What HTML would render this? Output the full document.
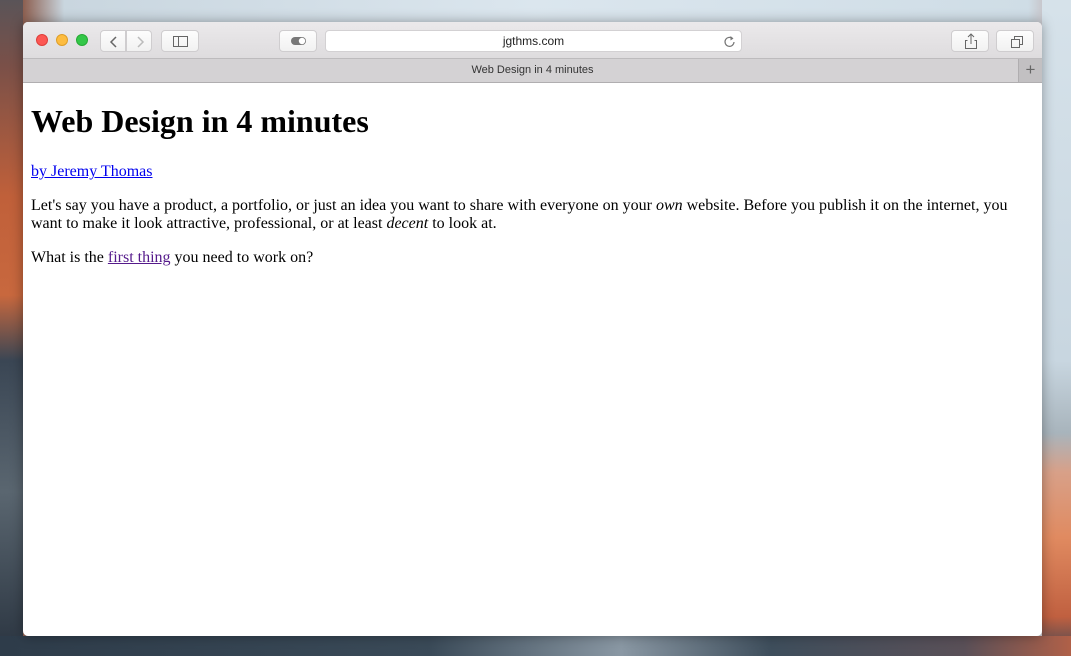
<!DOCTYPE html>
<html><head><meta charset="utf-8"><style>
*{margin:0;padding:0;box-sizing:border-box}
body{width:1071px;height:656px;overflow:hidden;position:relative;
background:linear-gradient(90deg,#6a4a48 0,#8a5a4a 2%,#c9d6df 6%,#dbe6ee 50%,#cfdde6 96%,#b89a98 100%);}
.bgl{position:absolute;left:0;top:0;width:23px;height:656px;background:linear-gradient(180deg,#5a5458 0,#7a5048 10%,#c0603a 30%,#c8683e 45%,#3a4654 55%,#5a6670 75%,#2a3440 100%)}
.bgr{position:absolute;left:1042px;top:0;width:29px;height:656px;background:linear-gradient(180deg,#d6e2ea 0,#c8d6e0 55%,#a8b4bc 66%,#d8a088 72%,#e08a60 82%,#c06040 94%,#3a4656 100%)}
.bgb{position:absolute;left:0;top:636px;width:1071px;height:20px;background:linear-gradient(90deg,#2e3c4a 0,#3a4a58 40%,#8a98a4 58%,#3e4e5c 72%,#5a5058 90%,#b06048 100%)}
.win{position:absolute;left:23px;top:22px;width:1019px;height:614px;background:#fff;border-radius:5px;overflow:hidden;box-shadow:0 0 12px rgba(0,0,0,.35)}
.tb{position:absolute;left:0;top:0;width:1019px;height:37px;background:linear-gradient(#ebe9eb,#dedcde);border-bottom:1px solid #bdbbbd}
.tabs{position:absolute;left:0;top:37px;width:1019px;height:24px;background:#d4d2d4;border-bottom:1px solid #b0aeb0;font:11px "Liberation Sans",sans-serif;color:#333;text-align:center;line-height:23px}
.plus{position:absolute;right:0;top:0;width:24px;height:23px;background:#c2c0c2;border-left:1px solid #b0aeb0;color:#666;font-size:17px;line-height:22px}
.dot{position:absolute;top:12px;width:12px;height:12px;border-radius:50%}
.btn{position:absolute;top:8px;height:22px;background:linear-gradient(#fdfdfd,#f1f1f1);border:1px solid #cfcdcf;border-radius:4px}
.url{position:absolute;left:302px;top:8px;width:417px;height:22px;background:#fff;border:1px solid #d3d1d3;border-radius:4px;font:12px "Liberation Sans",sans-serif;text-align:center;line-height:21px;color:#222}
.c{position:absolute;left:8px;top:61px;font-family:"Liberation Serif",serif;color:#000}
h1{font-size:32px;font-weight:bold;position:absolute;top:20px;left:0;white-space:nowrap}
p{font-size:16px;line-height:18px;position:absolute;left:0;width:1000px}
a{color:#0000ee}
</style></head><body>
<div class="bgl"></div><div class="bgr"></div><div class="bgb"></div>
<div class="win">
<div class="tb">
<div class="dot" style="left:13px;background:#fc5753;border:1px solid #de3f3b"></div>
<div class="dot" style="left:33px;background:#fdbc40;border:1px solid #de9e28"></div>
<div class="dot" style="left:53px;background:#33c748;border:1px solid #27aa35"></div>
<div class="btn" style="left:77px;width:26px;border-radius:4px 0 0 4px"><svg width="26" height="22"><path d="M15 6 L10 11 L15 16" fill="none" stroke="#666" stroke-width="1.5"/></svg></div>
<div class="btn" style="left:103px;width:26px;border-radius:0 4px 4px 0"><svg width="26" height="22"><path d="M11 6 L16 11 L11 16" fill="none" stroke="#bbb" stroke-width="1.5"/></svg></div>
<div class="btn" style="left:138px;width:38px"><svg width="38" height="22"><rect x="11.5" y="5.5" width="14" height="10" fill="none" stroke="#666"/><line x1="16.5" y1="5.5" x2="16.5" y2="15.5" stroke="#666"/></svg></div>
<div class="btn" style="left:256px;width:38px"><svg width="38" height="22"><rect x="11" y="6" width="15" height="8" rx="4" fill="#777"/><circle cx="22" cy="10" r="3.2" fill="#fff"/></svg></div>
<div class="url">jgthms.com<svg style="position:absolute;right:5px;top:4px" width="13" height="13"><path d="M9.5 3.5 A4.5 4.5 0 1 0 11 7" fill="none" stroke="#777" stroke-width="1.2"/><path d="M7.5 1 L10.5 3.5 L7.5 5.5" fill="#777"/></svg></div>
<div class="btn" style="left:928px;width:38px"><svg width="38" height="22"><path d="M15.5 9.5 H13.5 V17.5 H24.5 V9.5 H22.5 M19 3 V13 M16 6 L19 3 L22 6" fill="none" stroke="#666"/></svg></div>
<div class="btn" style="left:973px;width:38px"><svg width="38" height="22"><rect x="14.5" y="8.5" width="8" height="8" fill="none" stroke="#666"/><path d="M17.5 8.5 V5.5 H25.5 V13.5 H22.5" fill="none" stroke="#666"/></svg></div>
</div>
<div class="tabs">Web Design in 4 minutes<div class="plus">+</div></div>
<div class="c">
<h1>Web Design in 4 minutes</h1>
<p style="top:80px"><a href="#">by Jeremy Thomas</a></p>
<p style="top:114px">Let's say you have a product, a portfolio, or just an idea you want to share with everyone on your <i>own</i> website. Before you publish it on the internet, you want to make it look attractive, professional, or at least <i>decent</i> to look at.</p>
<p style="top:166px">What is the <a href="#" style="color:#551a8b">first thing</a> you need to work on?</p>
</div>
</div>
</body></html>
